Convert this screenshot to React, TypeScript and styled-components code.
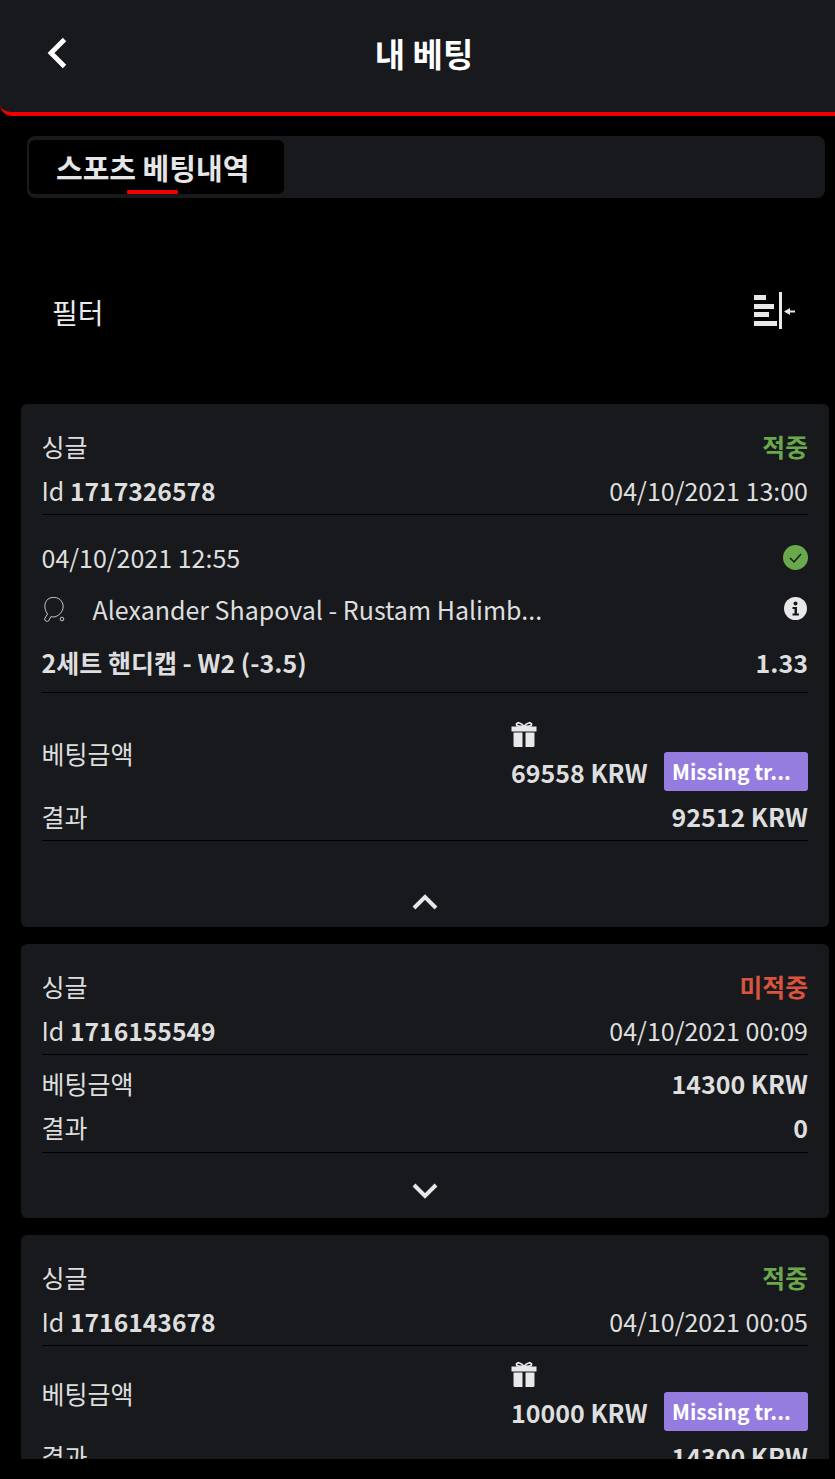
import React from "react";
import styled, { createGlobalStyle } from "styled-components";

const GlobalStyle = createGlobalStyle`
  html, body {
    margin: 0;
    padding: 0;
    background: #000;
  }
  body {
    font-family: "Noto Sans CJK KR", "Noto Sans", sans-serif;
    color: #e6e6e6;
  }
  * {
    box-sizing: border-box;
  }
`;

const Page = styled.div`
  width: 835px;
  height: 1459px;
  overflow: hidden;
  background: #000;
`;

const Header = styled.header`
  height: 116px;
  background: #17191d;
  border-bottom: 4px solid #f00000;
  border-bottom-left-radius: 12px;
  display: grid;
  grid-template-columns: 115px 1fr 102px;
  align-items: center;
  padding-bottom: 6px;
`;

const BackButton = styled.div`
  display: flex;
  padding-left: 45px;
`;

const Title = styled.h1`
  margin: 0;
  text-align: center;
  font-size: 33px;
  font-weight: 700;
  color: #fff;
  line-height: 40px;
`;

const Tabs = styled.nav`
  margin: 20px 10px 0 27px;
  height: 62px;
  background: #17191d;
  border-radius: 8px;
  padding: 4px 2px;
  display: flex;
`;

const Tab = styled.div`
  position: relative;
  width: 255px;
  padding-left: 27px;
  background: #000;
  border-radius: 6px;
  display: flex;
  align-items: center;
  font-size: 29px;
  font-weight: 700;
  color: #e6e6e6;
  line-height: 1;

  &::after {
    content: "";
    position: absolute;
    left: 98px;
    bottom: 0;
    width: 51px;
    height: 4px;
    border-radius: 1px;
    background: #f00000;
  }
`;

const FilterBar = styled.div`
  height: 206px;
  padding: 22px 39px 0 52px;
  display: flex;
  align-items: center;
  justify-content: space-between;
  font-size: 28px;
  color: #ebebeb;
`;

const CardList = styled.div`
  padding: 0 6px 0 21px;
  display: flex;
  flex-direction: column;
  gap: 17px;
`;

const Card = styled.section`
  background: #17191d;
  border-radius: 6px;
  padding: 20px 21px 0 20.5px;
  flex-shrink: 0;
`;

const Row = styled.div<{ $h?: number; $line?: boolean }>`
  min-height: ${(p) => p.$h ?? 44}px;
  display: flex;
  align-items: center;
  justify-content: space-between;
  font-size: 25px;
  line-height: 32px;
  color: #dedede;
  ${(p) => p.$line && "padding-bottom: 3px; border-bottom: 1px solid #000;"}
`;

const Status = styled.span<{ $won?: boolean }>`
  font-size: 24.8px;
  font-weight: 700;
  color: ${(p) => (p.$won ? "#69a84b" : "#d9533d")};
`;

const Strong = styled.b`
  font-weight: 700;
`;

const IdNumber = styled.b`
  font-size: 24.7px;
  font-weight: 700;
`;

const Legs = styled.div`
  padding: 16px 0 2px;
  border-bottom: 1px solid #000;
`;

const Match = styled.div`
  display: flex;
  align-items: center;
  gap: 25px;
  min-width: 0;
`;

const MatchName = styled.span`
  white-space: nowrap;
`;

const StakeBlock = styled.div<{ $top: number }>`
  padding-top: ${(p) => p.$top}px;
  display: flex;
  flex-direction: column;
  gap: 3px;
`;

const StakeRow = styled.div`
  display: flex;
  align-items: center;
  justify-content: space-between;
  font-size: 25px;
  line-height: 32px;
  color: #dedede;
`;

const StakeLabel = styled.span`
  margin-bottom: 8px;
`;

const StakeValue = styled.div`
  width: 297px;
  display: flex;
  flex-direction: column;
  gap: 5px;
`;

const StakeAmount = styled.div`
  display: flex;
  align-items: center;
  justify-content: space-between;
  font-weight: 700;
`;

const Badge = styled.span`
  width: 144px;
  height: 39px;
  padding: 0 8px;
  background: #957de0;
  border-radius: 3px;
  color: #fff;
  font-size: 21px;
  font-weight: 700;
  line-height: 39px;
  white-space: nowrap;
`;

const Body = styled.div`
  padding-top: 6px;
`;

const Toggle = styled.div<{ $h: number; $top: number }>`
  height: ${(p) => p.$h}px;
  padding-top: ${(p) => p.$top}px;
  display: flex;
  justify-content: center;
`;

const Back = () => (
  <svg width="24" height="36" viewBox="0 0 24 36" fill="none">
    <path d="M19.500 4.500L6 18l13.500 13.500" stroke="#fff" strokeWidth="4.800" />
  </svg>
);

const FilterSvg = styled.svg`
  display: block;
  margin-bottom: 3px;
`;

const FilterIcon = () => (
  <FilterSvg width="42" height="37" viewBox="0 0 42 37" fill="#e8e8e8">
    <rect x="0" y="3" width="12" height="5" />
    <rect x="0" y="12" width="20" height="5" />
    <rect x="0" y="20" width="15" height="5" />
    <rect x="0" y="29" width="23" height="5" />
    <rect x="25" y="0" width="3" height="37" />
    <path d="M30 19.500l6-3.500v2.500h5v2h-5v2.500z" />
  </FilterSvg>
);

const Chevron = ({ up }: { up?: boolean }) => (
  <svg width="28" height="18" viewBox="0 0 28 18" fill="none">
    <path
      d={up ? "M3 15L14 4l11 11" : "M3 3l11 11L25 3"}
      stroke="#e8e8e8"
      strokeWidth="4"
    />
  </svg>
);

const CheckIcon = () => (
  <svg width="25" height="25" viewBox="0 0 25 25" fill="none">
    <circle cx="12.500" cy="12.500" r="12.500" fill="#69a84b" />
    <path d="M7 13l4 4 7-8" stroke="#17191d" strokeWidth="1.500" />
  </svg>
);

const InfoSvg = styled.svg`
  margin-right: 1px;
`;

const InfoIcon = () => (
  <InfoSvg width="23" height="23" viewBox="0 0 23 23">
    <circle cx="11.500" cy="11.500" r="11.500" fill="#e8e8e8" />
    <circle cx="11.500" cy="6.500" r="2" fill="#17191d" />
    <path d="M8.500 10h4.500v6.500h2v2H8.500v-2h2V12h-2z" fill="#17191d" />
  </InfoSvg>
);

const PaddleIcon = () => (
  <svg width="26" height="26" viewBox="0 0 26 26" fill="none" stroke="#c8c8c8" strokeWidth="1">
    <path d="M5.500 18C1 12 2.500 4 8 2c6-2 12 1 13 7 1 5-3 11-9 12-1 0-2 0-3-.5L6.500 25c-1 1-4 0-4-2z" />
    <circle cx="20" cy="23" r="1.800" />
  </svg>
);

const GiftIcon = () => (
  <svg width="26" height="25" viewBox="0 0 26 25" fill="#e8e8e8" style={{ display: "block" }}>
    <path d="M.5 4.500h25v5H.5zM2.500 10.500h9V25h-7.500a1.500 1.500 0 0 1-1.500-1.500zM14.500 10.500h9v13a1.500 1.500 0 0 1-1.500 1.500h-7.500z" />
    <path
      d="M13 4.500C10 .5 6 0 5.500 2 5 4.500 9 4.500 13 4.500c4 0 8 0 7.500-2.500C20 0 16 .5 13 4.500z"
      fill="none"
      stroke="#e8e8e8"
      strokeWidth="1.800"
    />
  </svg>
);

interface StakeProps {
  amount: string;
}

const BonusStake = ({ amount }: StakeProps) => (
  <StakeRow>
    <StakeLabel>베팅금액</StakeLabel>
    <StakeValue>
      <GiftIcon />
      <StakeAmount>
        {amount}
        <Badge>Missing tr...</Badge>
      </StakeAmount>
    </StakeValue>
  </StakeRow>
);

const CardHead = ({ won, id, date }: { won: boolean; id: string; date: string }) => (
  <>
    <Row>
      <span>싱글</span>
      <Status $won={won}>{won ? "적중" : "미적중"}</Status>
    </Row>
    <Row $h={47} $line>
      <span>
        Id <IdNumber>{id}</IdNumber>
      </span>
      <span>{date}</span>
    </Row>
  </>
);

export default function App() {
  return (
    <Page>
      <GlobalStyle />
      <Header>
        <BackButton>
          <Back />
        </BackButton>
        <Title>내 베팅</Title>
      </Header>
      <Tabs>
        <Tab>스포츠 베팅내역</Tab>
      </Tabs>
      <FilterBar>
        필터
        <FilterIcon />
      </FilterBar>
      <CardList>
        <Card>
          <CardHead won id="1717326578" date="04/10/2021 13:00" />
          <Legs>
            <Row $h={52}>
              <span>04/10/2021 12:55</span>
              <CheckIcon />
            </Row>
            <Row $h={51}>
              <Match>
                <PaddleIcon />
                <MatchName>Alexander Shapoval - Rustam Halimb...</MatchName>
              </Match>
              <InfoIcon />
            </Row>
            <Row $h={56}>
              <Strong>2세트 핸디캡 - W2 (-3.5)</Strong>
              <Strong>1.33</Strong>
            </Row>
          </Legs>
          <StakeBlock $top={29}>
            <BonusStake amount="69558 KRW" />
            <Row $h={47} $line>
              <span>결과</span>
              <Strong>92512 KRW</Strong>
            </Row>
          </StakeBlock>
          <Toggle $h={86} $top={52}>
            <Chevron up />
          </Toggle>
        </Card>
        <Card>
          <CardHead won={false} id="1716155549" date="04/10/2021 00:09" />
          <Body>
            <Row>
              <span>베팅금액</span>
              <Strong>14300 KRW</Strong>
            </Row>
            <Row $h={48} $line>
              <span>결과</span>
              <Strong>0</Strong>
            </Row>
          </Body>
          <Toggle $h={65} $top={29}>
            <Chevron />
          </Toggle>
        </Card>
        <Card>
          <CardHead won id="1716143678" date="04/10/2021 00:05" />
          <StakeBlock $top={16}>
            <BonusStake amount="10000 KRW" />
            <Row $h={47} $line>
              <span>결과</span>
              <Strong>14300 KRW</Strong>
            </Row>
          </StakeBlock>
        </Card>
      </CardList>
    </Page>
  );
}
